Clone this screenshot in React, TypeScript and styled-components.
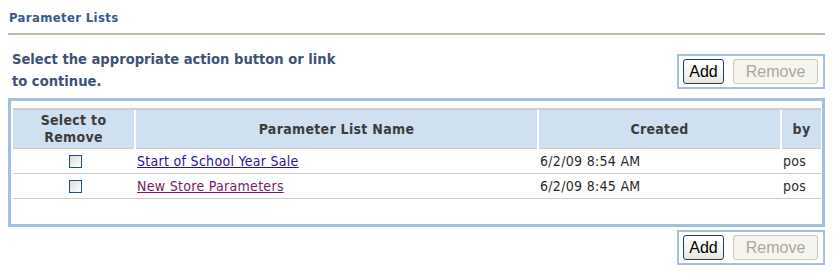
import styled, { createGlobalStyle } from 'styled-components';

const GlobalStyle = createGlobalStyle`
  body {
    margin: 0;
    background: #ffffff;
    font-family: "DejaVu Sans Condensed", "Liberation Sans", sans-serif;
  }
`;

type Row = {
  name: string;
  created: string;
  by: string;
  visited: boolean;
};

const rows: Row[] = [
  { name: 'Start of School Year Sale', created: '6/2/09 8:54 AM', by: 'pos', visited: false },
  { name: 'New Store Parameters', created: '6/2/09 8:45 AM', by: 'pos', visited: true },
];

const Page = styled.div`
  padding: 8px 10px 0 8px;
  width: 835px;
  box-sizing: border-box;
`;

const Title = styled.h1`
  margin: 0;
  padding: 2px 0 0 1px;
  height: 23px;
  font-size: 13px;
  letter-spacing: 0.35px;
  font-weight: bold;
  color: #3b5a8a;
  border-bottom: 2px solid #c2baa6;
`;

const TopBar = styled.div`
  display: flex;
  justify-content: space-between;
  align-items: flex-start;
  padding-top: 13px;
`;

const Instructions = styled.p`
  margin: 0;
  padding-left: 4px;
  font-size: 14.6px;
  font-weight: bold;
  line-height: 22px;
  color: #3e5277;
  white-space: nowrap;
`;

const ButtonBox = styled.div<{ $offset: number }>`
  display: flex;
  gap: 9px;
  margin-top: ${(p) => p.$offset}px;
  margin-left: auto;
  padding: 3px 5px 3px 4px;
  border: 2px solid #a3c0dc;
`;

const Button = styled.button`
  height: 25px;
  padding: 0 4px;
  font-family: "Liberation Sans", Arial, sans-serif;
  font-size: 16px;
  color: #000000;
  background: linear-gradient(#ffffff, #f0efe6 80%, #e2e0d4);
  border: 1px solid #1e3e6b;
  border-radius: 3px;

  &:disabled {
    color: #aca899;
    background: #f5f4ee;
    border-color: #cbc8b8;
  }
`;

const AddButton = styled(Button)`
  width: 41px;
`;

const RemoveButton = styled(Button)`
  width: 85px;
`;

const TableBox = styled.div`
  margin-top: 6px;
  padding: 7px 1px 25px 2px;
  border: 3px solid #a3c0dc;
`;

const Grid = styled.table`
  width: 100%;
  table-layout: fixed;
  border-collapse: collapse;
  font-size: 14px;
  letter-spacing: 0.3px;
  color: #2b2b2b;
`;

const HeadCell = styled.th<{ $width?: number }>`
  width: ${(p) => (p.$width ? `${p.$width}px` : 'auto')};
  height: 38px;
  padding: 0;
  font-weight: bold;
  font-size: 14px;
  line-height: 17px;
  color: #3c3c3c;
  text-align: center;
  background: #cfe0f0;
  border-top: 2px solid #cccccc;
  border-left: 2px solid #ffffff;
  border-bottom: 1px solid #cccccc;

  &:first-child {
    border-left: none;
  }
`;

const BodyRow = styled.tr`
  height: 25px;
  border-bottom: 1px solid #cccccc;
`;

const Cell = styled.td<{ $center?: boolean }>`
  padding: 0 0 0 2px;
  text-align: ${(p) => (p.$center ? 'center' : 'left')};
  vertical-align: middle;
  white-space: nowrap;
`;

const Check = styled.span`
  display: inline-block;
  width: 11px;
  height: 11px;
  margin-top: 3px;
  border: 1px solid #1c5180;
  background: linear-gradient(135deg, #dcdcd6, #ffffff);
`;

const NameLink = styled.a<{ $visited: boolean }>`
  color: ${(p) => (p.$visited ? '#7a1a66' : '#2a10a6')};
  text-decoration: underline;
  cursor: pointer;
`;

const BottomBar = styled.div`
  display: flex;
  justify-content: flex-end;
`;

export default function App() {
  return (
    <>
      <GlobalStyle />
      <Page>
        <Title>Parameter Lists</Title>
        <TopBar>
          <Instructions>
            Select the appropriate action button or link
            <br />
            to continue.
          </Instructions>
          <ButtonBox $offset={6}>
            <AddButton>Add</AddButton>
            <RemoveButton disabled>Remove</RemoveButton>
          </ButtonBox>
        </TopBar>
        <TableBox>
          <Grid>
            <thead>
              <tr>
                <HeadCell $width={121}>
                  Select to
                  <br />
                  Remove
                </HeadCell>
                <HeadCell $width={401}>Parameter List Name</HeadCell>
                <HeadCell $width={241}>Created</HeadCell>
                <HeadCell>by</HeadCell>
              </tr>
            </thead>
            <tbody>
              {rows.map((r) => (
                <BodyRow key={r.name}>
                  <Cell $center>
                    <Check />
                  </Cell>
                  <Cell>
                    <NameLink $visited={r.visited}>{r.name}</NameLink>
                  </Cell>
                  <Cell>{r.created}</Cell>
                  <Cell>{r.by}</Cell>
                </BodyRow>
              ))}
            </tbody>
          </Grid>
        </TableBox>
        <BottomBar>
          <ButtonBox $offset={3}>
            <AddButton>Add</AddButton>
            <RemoveButton disabled>Remove</RemoveButton>
          </ButtonBox>
        </BottomBar>
      </Page>
    </>
  );
}
